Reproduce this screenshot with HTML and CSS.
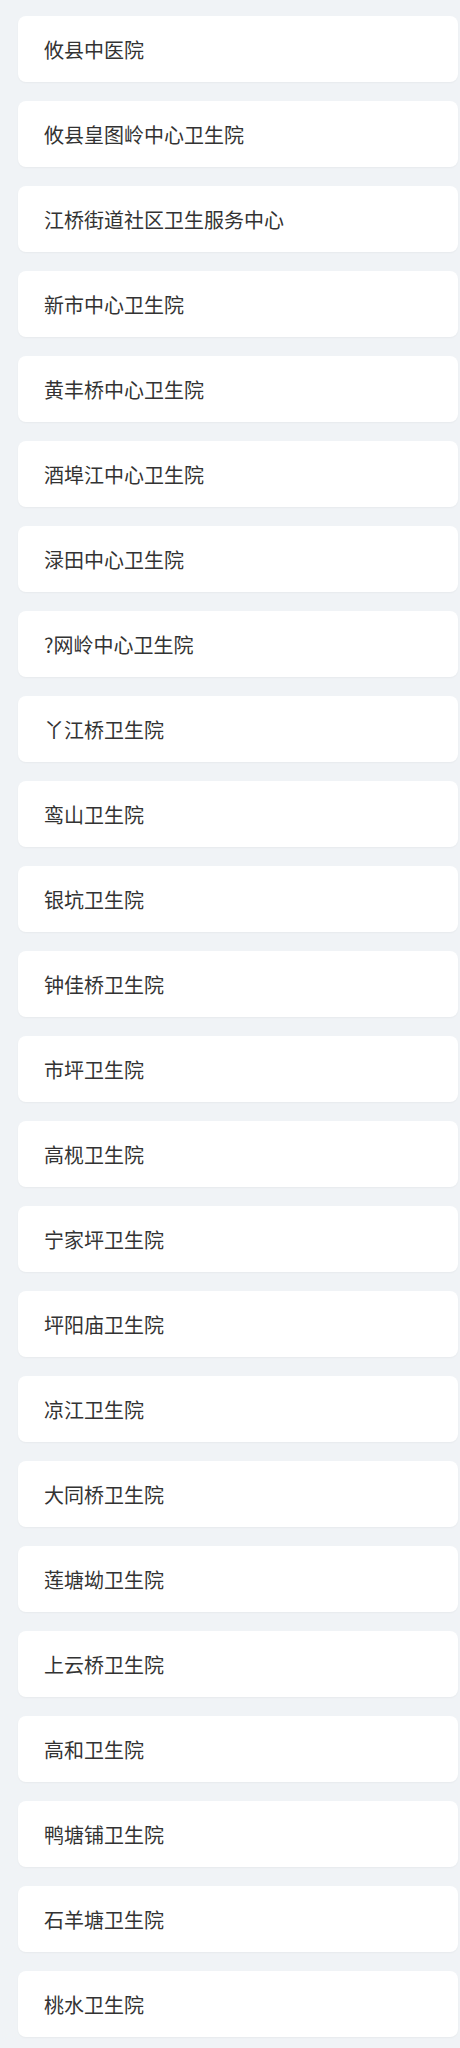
FILE: index.html
```html
<!DOCTYPE html>
<html lang="zh">
<head>
<meta charset="utf-8">
<link rel="stylesheet" href="styles.css">
</head>
<body>
<div class="list">
  <div class="item">攸县中医院</div>
  <div class="item">攸县皇图岭中心卫生院</div>
  <div class="item">江桥街道社区卫生服务中心</div>
  <div class="item">新市中心卫生院</div>
  <div class="item">黄丰桥中心卫生院</div>
  <div class="item">酒埠江中心卫生院</div>
  <div class="item">渌田中心卫生院</div>
  <div class="item">?网岭中心卫生院</div>
  <div class="item">丫江桥卫生院</div>
  <div class="item">鸾山卫生院</div>
  <div class="item">银坑卫生院</div>
  <div class="item">钟佳桥卫生院</div>
  <div class="item">市坪卫生院</div>
  <div class="item">高枧卫生院</div>
  <div class="item">宁家坪卫生院</div>
  <div class="item">坪阳庙卫生院</div>
  <div class="item">凉江卫生院</div>
  <div class="item">大同桥卫生院</div>
  <div class="item">莲塘坳卫生院</div>
  <div class="item">上云桥卫生院</div>
  <div class="item">高和卫生院</div>
  <div class="item">鸭塘铺卫生院</div>
  <div class="item">石羊塘卫生院</div>
  <div class="item">桃水卫生院</div>
</div>
</body>
</html>
```
FILE: styles.css
```css
html, body {
  margin: 0;
  padding: 0;
  background: #f0f3f6;
}
body {
  font-family: "Noto Sans CJK SC", "Noto Sans", sans-serif;
}
.list {
  display: flex;
  flex-direction: column;
  gap: 19px;
  padding: 16px 2px 16px 18px;
}
.item {
  height: 66px;
  box-sizing: border-box;
  display: flex;
  align-items: center;
  padding-left: 26px;
  background: #ffffff;
  border-radius: 8px;
  box-shadow: 0 1px 2px rgba(0, 0, 0, 0.04);
  font-size: 20px;
  color: #333333;
}
```
